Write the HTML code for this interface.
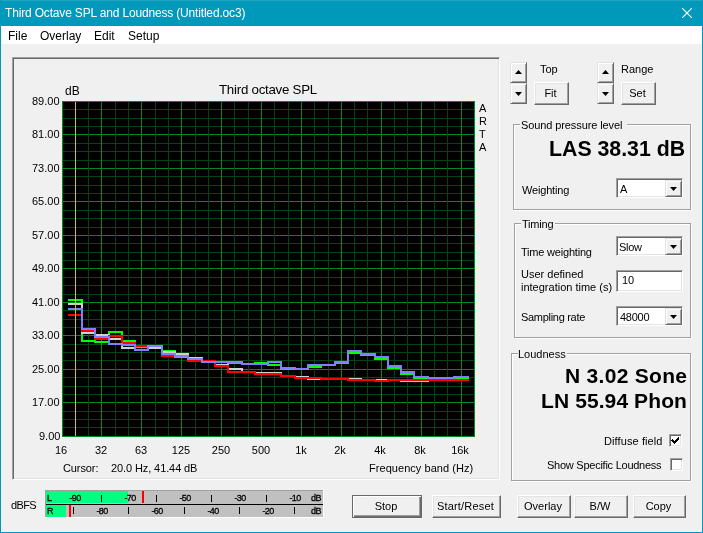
<!DOCTYPE html>
<html><head><meta charset="utf-8">
<style>
*{margin:0;padding:0;box-sizing:border-box}
html,body{width:703px;height:533px;overflow:hidden;background:#f0f0f0;font-family:"Liberation Sans",sans-serif;color:#000}
.a{position:absolute;white-space:nowrap;will-change:transform}
.btn{position:absolute;will-change:transform;background:#f0f0f0;border-style:solid;border-width:1px;border-color:#fff #696969 #696969 #fff;box-shadow:inset -1px -1px 0 #a0a0a0, inset 1px 1px 0 #e3e3e3;text-align:center;font-size:11px}
.btn span{display:block;position:relative;top:-1px;padding-right:2px}
.btn.def{border:1px solid #696969;box-shadow:inset 1px 1px 0 #fff, inset -1px -1px 0 #696969, inset -2px -2px 0 #a0a0a0}
.spin{position:absolute;background:#f0f0f0;border-style:solid;border-width:1px;border-color:#e3e3e3 #696969 #696969 #e3e3e3;box-shadow:inset 1px 1px 0 #fff, inset -1px -1px 0 #a0a0a0}
.grp{position:absolute;border:1px solid #a0a0a0;box-shadow:1px 1px 0 #fff, inset 1px 1px 0 #fff}
.grp .t{position:absolute;top:-8px;left:6px;background:#f0f0f0;padding:0 2px;font-size:11px;line-height:14px}
.combo{position:absolute;background:#fff;border-style:solid;border-width:1px;border-color:#a0a0a0 #fff #fff #a0a0a0;box-shadow:inset 1px 1px 0 #696969, inset -1px -1px 0 #e3e3e3}
.t11{font-size:11px;line-height:13px}
.dbtn{position:absolute;background:#f0f0f0;border-style:solid;border-width:1px;border-color:#e3e3e3 #696969 #696969 #e3e3e3;box-shadow:inset 1px 1px 0 #fff, inset -1px -1px 0 #a0a0a0}
</style></head><body>

<div class="a" style="left:0;top:0;width:703px;height:26px;background:#0099bc"></div>
<div class="a" style="left:0;top:0;width:703px;height:1px;background:#21a3c3"></div>
<div class="a" style="left:0;top:0;width:1px;height:533px;background:#0099bc"></div>
<div class="a" style="left:702px;top:0;width:1px;height:533px;background:#0099bc"></div>
<div class="a" style="left:0;top:532px;width:703px;height:1px;background:#0099bc"></div>
<div class="a" style="left:5px;top:6px;font-size:12px;line-height:14px;letter-spacing:-0.17px;color:#fff">Third Octave SPL and Loudness (Untitled.oc3)</div>
<svg class="a" style="left:682px;top:8px" width="10" height="10" viewBox="0 0 10 10"><path d="M0 0L10 10M10 0L0 10" stroke="#fff" stroke-width="1.2"/></svg>
<div class="a" style="left:1px;top:26px;width:701px;height:18px;background:#fff"></div>
<div class="a" style="left:8px;top:29px;font-size:12px;line-height:14px">File</div>
<div class="a" style="left:40px;top:29px;font-size:12px;line-height:14px">Overlay</div>
<div class="a" style="left:94px;top:29px;font-size:12px;line-height:14px">Edit</div>
<div class="a" style="left:128px;top:29px;font-size:12px;line-height:14px">Setup</div>
<div class="a" style="left:12px;top:57px;width:488px;height:423px;border-style:solid;border-width:1px;border-color:#a0a0a0 #fff #fff #a0a0a0;box-shadow:inset 1px 1px 0 #696969, inset -1px -1px 0 #e3e3e3"></div>
<svg class="a" style="left:0;top:0" width="703" height="533" viewBox="0 0 703 533" shape-rendering="crispEdges">
<rect x="62" y="101" width="413" height="336" fill="#000"/>
<rect x="62" y="101" width="413" height="1" fill="#008a24"/>
<rect x="62" y="109" width="413" height="1" fill="#004414"/>
<rect x="62" y="118" width="413" height="1" fill="#004414"/>
<rect x="62" y="126" width="413" height="1" fill="#004414"/>
<rect x="62" y="134" width="413" height="1" fill="#008a24"/>
<rect x="62" y="143" width="413" height="1" fill="#004414"/>
<rect x="62" y="151" width="413" height="1" fill="#004414"/>
<rect x="62" y="160" width="413" height="1" fill="#004414"/>
<rect x="62" y="168" width="413" height="1" fill="#008a24"/>
<rect x="62" y="176" width="413" height="1" fill="#004414"/>
<rect x="62" y="185" width="413" height="1" fill="#004414"/>
<rect x="62" y="193" width="413" height="1" fill="#004414"/>
<rect x="62" y="201" width="413" height="1" fill="#008a24"/>
<rect x="62" y="210" width="413" height="1" fill="#004414"/>
<rect x="62" y="218" width="413" height="1" fill="#004414"/>
<rect x="62" y="227" width="413" height="1" fill="#004414"/>
<rect x="62" y="235" width="413" height="1" fill="#008a24"/>
<rect x="62" y="243" width="413" height="1" fill="#004414"/>
<rect x="62" y="252" width="413" height="1" fill="#004414"/>
<rect x="62" y="260" width="413" height="1" fill="#004414"/>
<rect x="62" y="268" width="413" height="1" fill="#008a24"/>
<rect x="62" y="277" width="413" height="1" fill="#004414"/>
<rect x="62" y="285" width="413" height="1" fill="#004414"/>
<rect x="62" y="294" width="413" height="1" fill="#004414"/>
<rect x="62" y="302" width="413" height="1" fill="#008a24"/>
<rect x="62" y="310" width="413" height="1" fill="#004414"/>
<rect x="62" y="319" width="413" height="1" fill="#004414"/>
<rect x="62" y="327" width="413" height="1" fill="#004414"/>
<rect x="62" y="335" width="413" height="1" fill="#008a24"/>
<rect x="62" y="344" width="413" height="1" fill="#004414"/>
<rect x="62" y="352" width="413" height="1" fill="#004414"/>
<rect x="62" y="360" width="413" height="1" fill="#004414"/>
<rect x="62" y="369" width="413" height="1" fill="#008a24"/>
<rect x="62" y="377" width="413" height="1" fill="#004414"/>
<rect x="62" y="386" width="413" height="1" fill="#004414"/>
<rect x="62" y="394" width="413" height="1" fill="#004414"/>
<rect x="62" y="402" width="413" height="1" fill="#008a24"/>
<rect x="62" y="411" width="413" height="1" fill="#004414"/>
<rect x="62" y="419" width="413" height="1" fill="#004414"/>
<rect x="62" y="427" width="413" height="1" fill="#004414"/>
<rect x="62" y="436" width="413" height="1" fill="#008a24"/>
<rect x="62" y="101" width="1" height="336" fill="#008a24"/>
<rect x="75" y="101" width="1" height="336" fill="#004414"/>
<rect x="88" y="101" width="1" height="336" fill="#004414"/>
<rect x="101" y="101" width="1" height="336" fill="#008a24"/>
<rect x="115" y="101" width="1" height="336" fill="#004414"/>
<rect x="128" y="101" width="1" height="336" fill="#004414"/>
<rect x="141" y="101" width="1" height="336" fill="#008a24"/>
<rect x="155" y="101" width="1" height="336" fill="#004414"/>
<rect x="168" y="101" width="1" height="336" fill="#004414"/>
<rect x="181" y="101" width="1" height="336" fill="#008a24"/>
<rect x="195" y="101" width="1" height="336" fill="#004414"/>
<rect x="208" y="101" width="1" height="336" fill="#004414"/>
<rect x="221" y="101" width="1" height="336" fill="#008a24"/>
<rect x="234" y="101" width="1" height="336" fill="#004414"/>
<rect x="248" y="101" width="1" height="336" fill="#004414"/>
<rect x="261" y="101" width="1" height="336" fill="#008a24"/>
<rect x="274" y="101" width="1" height="336" fill="#004414"/>
<rect x="288" y="101" width="1" height="336" fill="#004414"/>
<rect x="301" y="101" width="1" height="336" fill="#008a24"/>
<rect x="314" y="101" width="1" height="336" fill="#004414"/>
<rect x="328" y="101" width="1" height="336" fill="#004414"/>
<rect x="341" y="101" width="1" height="336" fill="#008a24"/>
<rect x="354" y="101" width="1" height="336" fill="#004414"/>
<rect x="367" y="101" width="1" height="336" fill="#004414"/>
<rect x="381" y="101" width="1" height="336" fill="#008a24"/>
<rect x="394" y="101" width="1" height="336" fill="#004414"/>
<rect x="407" y="101" width="1" height="336" fill="#004414"/>
<rect x="421" y="101" width="1" height="336" fill="#008a24"/>
<rect x="434" y="101" width="1" height="336" fill="#004414"/>
<rect x="447" y="101" width="1" height="336" fill="#004414"/>
<rect x="461" y="101" width="1" height="336" fill="#008a24"/>
<rect x="474" y="101" width="1" height="336" fill="#004414"/>
<rect x="62" y="101" width="412" height="335" fill="none" stroke="#008a24" stroke-width="1" transform="translate(0.5 0.5)"/>
<path d="M68 300H82V341H95V342H109V332H122V341H135V347H148V348H162V351H175V357H188V359H202V362H215V362H228V363H242V364H255V363H268V365H281V369H295V369H308V367H321V365H335V363H348V353H361V355H375V359H388V368H401V374H414V378H428V378H441V378H454V378H469" stroke="#00ff00" stroke-width="2" fill="none" stroke-linejoin="miter"/>
<path d="M68 304H82V333H95V335H109V339H122V348H135V350H148V348H162V352H175V354H188V358H202V362H215V365H228V369H242V372H255V373H268V373H281V376H295V377H308V379H321V379H335V379H348V379H361V380H375V380H388V380H401V381H414V381H428V380H441V380H454V380H469" stroke="#d0d0d0" stroke-width="2" fill="none" stroke-linejoin="miter"/>
<path d="M68 315H82V331H95V339H109V336H122V343H135V346H148V346H162V356H175V356H188V361H202V361H215V366H228V372H242V372H255V374H268V374H281V376H295V378H308V378H321V379H335V379H348V380H361V380H375V381H388V380H401V380H414V380H428V380H441V380H454V380H469" stroke="#ff0000" stroke-width="2" fill="none" stroke-linejoin="miter"/>
<path d="M68 309H82V329H95V337H109V344H122V345H135V350H148V346H162V354H175V356H188V359H202V362H215V362H228V362H242V364H255V364H268V362H281V368H295V369H308V365H321V365H335V362H348V351H361V354H375V357H388V366H401V372H414V377H428V378H441V378H454V377H469" stroke="#8080ff" stroke-width="2" fill="none" stroke-linejoin="miter"/>
<rect x="75" y="102" width="1" height="334" fill="#d2c800"/>
</svg>
<div class="a t11" style="right:643px;top:95px;text-align:right">89.00</div>
<div class="a t11" style="right:643px;top:128px;text-align:right">81.00</div>
<div class="a t11" style="right:643px;top:162px;text-align:right">73.00</div>
<div class="a t11" style="right:643px;top:195px;text-align:right">65.00</div>
<div class="a t11" style="right:643px;top:229px;text-align:right">57.00</div>
<div class="a t11" style="right:643px;top:262px;text-align:right">49.00</div>
<div class="a t11" style="right:643px;top:296px;text-align:right">41.00</div>
<div class="a t11" style="right:643px;top:329px;text-align:right">33.00</div>
<div class="a t11" style="right:643px;top:363px;text-align:right">25.00</div>
<div class="a t11" style="right:643px;top:396px;text-align:right">17.00</div>
<div class="a t11" style="right:643px;top:430px;text-align:right">9.00</div>
<div class="a t11" style="left:41px;top:444px;width:40px;text-align:center">16</div>
<div class="a t11" style="left:81px;top:444px;width:40px;text-align:center">32</div>
<div class="a t11" style="left:121px;top:444px;width:40px;text-align:center">63</div>
<div class="a t11" style="left:161px;top:444px;width:40px;text-align:center">125</div>
<div class="a t11" style="left:201px;top:444px;width:40px;text-align:center">250</div>
<div class="a t11" style="left:241px;top:444px;width:40px;text-align:center">500</div>
<div class="a t11" style="left:281px;top:444px;width:40px;text-align:center">1k</div>
<div class="a t11" style="left:320px;top:444px;width:40px;text-align:center">2k</div>
<div class="a t11" style="left:360px;top:444px;width:40px;text-align:center">4k</div>
<div class="a t11" style="left:400px;top:444px;width:40px;text-align:center">8k</div>
<div class="a t11" style="left:440px;top:444px;width:40px;text-align:center">16k</div>
<div class="a" style="left:65px;top:84px;font-size:12px;line-height:14px">dB</div>
<div class="a" style="left:219px;top:83px;font-size:13.3px;line-height:14px;letter-spacing:-0.25px">Third octave SPL</div>
<div class="a t11" style="left:479px;top:102px">A</div>
<div class="a t11" style="left:479px;top:115px">R</div>
<div class="a t11" style="left:479px;top:128px">T</div>
<div class="a t11" style="left:479px;top:141px">A</div>
<div class="a t11" style="left:63px;top:462px;letter-spacing:-0.1px">Cursor:</div>
<div class="a t11" style="left:111px;top:462px;letter-spacing:-0.1px">20.0 Hz, 41.44 dB</div>
<div class="a t11" style="left:369px;top:462px;letter-spacing:0.05px">Frequency band (Hz)</div>
<div class="spin" style="left:510px;top:62px;width:17px;height:21px"></div><svg class="a" style="left:515px;top:70px" width="7" height="4"><path d="M3.5 0L7 4H0Z" fill="#000"/></svg>
<div class="spin" style="left:510px;top:83px;width:17px;height:21px"></div><svg class="a" style="left:515px;top:92px" width="7" height="4"><path d="M0 0H7L3.5 4Z" fill="#000"/></svg>
<div class="spin" style="left:597px;top:62px;width:17px;height:21px"></div><svg class="a" style="left:602px;top:70px" width="7" height="4"><path d="M3.5 0L7 4H0Z" fill="#000"/></svg>
<div class="spin" style="left:597px;top:83px;width:17px;height:21px"></div><svg class="a" style="left:602px;top:92px" width="7" height="4"><path d="M0 0H7L3.5 4Z" fill="#000"/></svg>
<div class="a t11" style="left:540px;top:63px">Top</div>
<div class="a t11" style="left:621px;top:63px">Range</div>
<div class="btn" style="left:534px;top:82px;width:35px;height:23px;"><span style="line-height:23px;font-size:11px">Fit</span></div>
<div class="btn" style="left:621px;top:82px;width:35px;height:23px;"><span style="line-height:23px;font-size:11px">Set</span></div>
<div class="grp" style="left:513px;top:124px;width:178px;height:86px"></div><div class="a" style="left:520px;top:123px;width:107px;height:3px;background:#f0f0f0"></div>
<div class="a t11" style="left:521px;top:119px;letter-spacing:-0.1px;">Sound pressure level</div>
<div class="a" style="right:18px;top:137px;font-size:21.3px;line-height:24px;font-weight:bold">LAS 38.31 dB</div>
<div class="a t11" style="left:522px;top:184px;letter-spacing:-0.18px;">Weighting</div>
<div class="combo" style="left:616px;top:178px;width:67px;height:20px"></div><div class="a t11" style="left:620px;top:183px;letter-spacing:0px;">A</div><div class="dbtn" style="left:665px;top:180px;width:17px;height:17px"></div><svg class="a" style="left:670px;top:187px" width="7" height="4"><path d="M0 0H7L3.5 4Z" fill="#000"/></svg>
<div class="grp" style="left:514px;top:223px;width:177px;height:115px"></div><div class="a" style="left:521px;top:222px;width:34px;height:3px;background:#f0f0f0"></div>
<div class="a t11" style="left:522px;top:218px;letter-spacing:-0.2px;">Timing</div>
<div class="a t11" style="left:521px;top:246px;letter-spacing:-0.2px;">Time weighting</div>
<div class="combo" style="left:616px;top:236px;width:67px;height:20px"></div><div class="a t11" style="left:619px;top:241px;letter-spacing:-0.3px;">Slow</div><div class="dbtn" style="left:665px;top:238px;width:17px;height:17px"></div><svg class="a" style="left:670px;top:245px" width="7" height="4"><path d="M0 0H7L3.5 4Z" fill="#000"/></svg>
<div class="a t11" style="left:521px;top:268px;letter-spacing:0px;">User defined</div>
<div class="a t11" style="left:521px;top:281px;letter-spacing:0px;">integration time (s)</div>
<div class="combo" style="left:616px;top:270px;width:67px;height:22px"></div><div class="a t11" style="left:622px;top:274px;letter-spacing:0px;">10</div>
<div class="a t11" style="left:521px;top:311px;letter-spacing:-0.3px;">Sampling rate</div>
<div class="combo" style="left:616px;top:306px;width:67px;height:20px"></div><div class="a t11" style="left:620px;top:311px;letter-spacing:-0.25px;">48000</div><div class="dbtn" style="left:665px;top:308px;width:17px;height:17px"></div><svg class="a" style="left:670px;top:315px" width="7" height="4"><path d="M0 0H7L3.5 4Z" fill="#000"/></svg>
<div class="grp" style="left:511px;top:353px;width:180px;height:128px"></div><div class="a" style="left:518px;top:352px;width:49px;height:3px;background:#f0f0f0"></div>
<div class="a t11" style="left:518px;top:348px;letter-spacing:0px;">Loudness</div>
<div class="a" style="right:16px;top:364px;font-size:21px;line-height:24px;font-weight:bold;letter-spacing:0.3px">N 3.02 Sone</div>
<div class="a" style="right:16px;top:389px;font-size:21px;line-height:24px;font-weight:bold;letter-spacing:0.1px">LN 55.94 Phon</div>
<div class="a t11" style="right:40px;top:435px;letter-spacing:0.1px;">Diffuse field</div>
<div class="a t11" style="right:42px;top:459px;letter-spacing:-0.25px;">Show Specific Loudness</div>
<div class="combo" style="left:669px;top:434px;width:13px;height:13px"></div><svg class="a" style="left:669px;top:434px" width="13" height="13" shape-rendering="crispEdges"><path d="M3 5h1v1h1v1h1v-1h1v-1h1v-1h1v-1h1v3h-1v1h-1v1h-1v1h-1v1h-1v-1h-1v-1h-1v-1h-1z" fill="#000"/></svg>
<div class="combo" style="left:670px;top:458px;width:13px;height:13px"></div>
<div class="a t11" style="left:11px;top:499px;letter-spacing:-0.6px;">dBFS</div>
<svg class="a" style="left:0;top:0" width="703" height="533" shape-rendering="crispEdges">
<rect x="45" y="490" width="279" height="28" fill="#ffffff"/>
<rect x="45" y="490" width="278" height="27" fill="#a0a0a0"/>
<rect x="46" y="491" width="277" height="26" fill="#c0c0c0"/>
<rect x="46" y="491" width="82" height="12" fill="#00ff80"/>
<rect x="46" y="505" width="20" height="12" fill="#00ff80"/>
<rect x="46" y="504" width="277" height="1" fill="#000"/>
<rect x="142" y="491" width="2" height="12" fill="#f00"/>
<rect x="69" y="505" width="2" height="12" fill="#f00"/>
<rect x="294" y="507" width="1" height="7" fill="#000"/>
<rect x="266" y="495" width="1" height="7" fill="#000"/>
<rect x="239" y="507" width="1" height="7" fill="#000"/>
<rect x="211" y="495" width="1" height="7" fill="#000"/>
<rect x="184" y="507" width="1" height="7" fill="#000"/>
<rect x="156" y="495" width="1" height="7" fill="#000"/>
<rect x="128" y="507" width="1" height="7" fill="#000"/>
<rect x="101" y="495" width="1" height="7" fill="#000"/>
<rect x="73" y="507" width="1" height="7" fill="#000"/>
</svg>
<div class="a" style="left:47px;top:492px;font-size:9px;line-height:12px;letter-spacing:-0.6px;-webkit-text-stroke:0.3px #000;">L</div>
<div class="a" style="left:47px;top:505px;font-size:9px;line-height:12px;letter-spacing:-0.6px;-webkit-text-stroke:0.3px #000;">R</div>
<div class="a" style="left:280px;top:492px;width:30px;text-align:center;font-size:9px;line-height:12px;letter-spacing:-0.6px;-webkit-text-stroke:0.3px #000;">-10</div>
<div class="a" style="left:253px;top:505px;width:30px;text-align:center;font-size:9px;line-height:12px;letter-spacing:-0.6px;-webkit-text-stroke:0.3px #000;">-20</div>
<div class="a" style="left:225px;top:492px;width:30px;text-align:center;font-size:9px;line-height:12px;letter-spacing:-0.6px;-webkit-text-stroke:0.3px #000;">-30</div>
<div class="a" style="left:198px;top:505px;width:30px;text-align:center;font-size:9px;line-height:12px;letter-spacing:-0.6px;-webkit-text-stroke:0.3px #000;">-40</div>
<div class="a" style="left:170px;top:492px;width:30px;text-align:center;font-size:9px;line-height:12px;letter-spacing:-0.6px;-webkit-text-stroke:0.3px #000;">-50</div>
<div class="a" style="left:142px;top:505px;width:30px;text-align:center;font-size:9px;line-height:12px;letter-spacing:-0.6px;-webkit-text-stroke:0.3px #000;">-60</div>
<div class="a" style="left:115px;top:492px;width:30px;text-align:center;font-size:9px;line-height:12px;letter-spacing:-0.6px;-webkit-text-stroke:0.3px #000;">-70</div>
<div class="a" style="left:87px;top:505px;width:30px;text-align:center;font-size:9px;line-height:12px;letter-spacing:-0.6px;-webkit-text-stroke:0.3px #000;">-80</div>
<div class="a" style="left:60px;top:492px;width:30px;text-align:center;font-size:9px;line-height:12px;letter-spacing:-0.6px;-webkit-text-stroke:0.3px #000;">-90</div>
<div class="a" style="left:309px;top:492px;width:14px;text-align:center;font-size:9px;line-height:12px;letter-spacing:-0.6px;-webkit-text-stroke:0.3px #000;">dB</div>
<div class="a" style="left:309px;top:505px;width:14px;text-align:center;font-size:9px;line-height:12px;letter-spacing:-0.6px;-webkit-text-stroke:0.3px #000;">dB</div>
<div class="btn def" style="left:352px;top:495px;width:70px;height:23px;"><span style="line-height:23px;font-size:11px">Stop</span></div>
<div class="btn" style="left:432px;top:495px;width:69px;height:23px;"><span style="line-height:23px;font-size:11px"><i style="font-style:normal;letter-spacing:0.2px">Start/Reset</i></span></div>
<div class="btn" style="left:517px;top:495px;width:54px;height:23px;"><span style="line-height:23px;font-size:11px">Overlay</span></div>
<div class="btn" style="left:574px;top:495px;width:54px;height:23px;"><span style="line-height:23px;font-size:11px">B/W</span></div>
<div class="btn" style="left:633px;top:495px;width:53px;height:23px;"><span style="line-height:23px;font-size:11px">Copy</span></div>
</body></html>
